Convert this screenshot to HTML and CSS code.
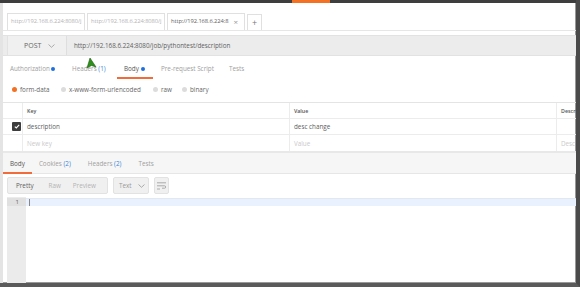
FILE: index.html
```html
<!DOCTYPE html>
<html lang="en">
<head>
    <meta charset="UTF-8">
    <title>Postman</title>
    <link rel="stylesheet" href="styles.css">
</head>
<body>
    <div class="screen">
        <div class="topbar"><span class="topbar-mark"></span></div>
        <div class="app">
            <div class="tabs">
                <div class="tab">http://192.168.6.224:8080/j</div>
                <div class="tab">http://192.168.6.224:8080/j</div>
                <div class="tab active"><span class="tab-text">http://192.168.6.224:8</span><span class="tab-close">&times;</span></div>
                <div class="tab-add">+</div>
            </div>
            <div class="request">
                <div class="method">POST
                    <svg class="chev" width="7" height="4" viewBox="0 0 7 4"><path d="M0.5 0.5 L3.5 3.3 L6.5 0.5" fill="none" stroke="#999" stroke-width="0.8"/></svg>
                </div>
                <div class="url">http://192.168.6.224:8080/job/pythontest/description</div>
            </div>
            <div class="subtabs">
                <span class="subtab">Authorization <i class="dot"></i></span>
                <span class="subtab">Headers <b class="count">(1)</b></span>
                <span class="subtab current">Body <i class="dot"></i></span>
                <span class="subtab">Pre-request Script</span>
                <span class="subtab">Tests</span>
            </div>
            <div class="radios">
                <span class="radio r1"><i class="circle on"></i>form-data</span>
                <span class="radio r2"><i class="circle"></i>x-www-form-urlencoded</span>
                <span class="radio r3"><i class="circle"></i>raw</span>
                <span class="radio"><i class="circle"></i>binary</span>
            </div>
            <div class="table">
                <div class="row head">
                    <div class="cell check"></div>
                    <div class="cell key">Key</div>
                    <div class="cell">Value</div>
                    <div class="cell desc">Descri</div>
                </div>
                <div class="row">
                    <div class="cell check"><span class="box">
                        <svg width="6" height="5" viewBox="0 0 6 5"><path d="M0.8 2.6 L2.3 3.9 L5.2 0.8" fill="none" stroke="#fff" stroke-width="1.1"/></svg>
                    </span></div>
                    <div class="cell key text">description</div>
                    <div class="cell text">desc change</div>
                    <div class="cell desc"></div>
                </div>
                <div class="row">
                    <div class="cell check"></div>
                    <div class="cell key hint">New key</div>
                    <div class="cell hint">Value</div>
                    <div class="cell desc hint">Desc</div>
                </div>
            </div>
            <div class="response">
                <div class="restabs">
                    <span class="restab current">Body</span>
                    <span class="restab">Cookies <b class="count">(2)</b></span>
                    <span class="restab">Headers <b class="count">(2)</b></span>
                    <span class="restab">Tests</span>
                </div>
            </div>
            <div class="toolbar">
                <div class="segment">
                    <span class="seg active">Pretty</span>
                    <span class="seg">Raw</span>
                    <span class="seg">Preview</span>
                </div>
                <div class="select">Text
                    <svg class="chev" width="7" height="4" viewBox="0 0 7 4"><path d="M0.5 0.5 L3.5 3.3 L6.5 0.5" fill="none" stroke="#999" stroke-width="0.8"/></svg>
                </div>
                <div class="wrap">
                    <svg width="9" height="8" viewBox="0 0 9 8"><path d="M0 0.8 H9 M0 3.8 H7.5 a1.2 1.2 0 0 1 0 2.4 H5 M0 7 H3" fill="none" stroke="#999" stroke-width="0.8"/></svg>
                </div>
            </div>
            <div class="editor">
                <div class="gutter"><div class="lineno">1</div></div>
                <div class="code"><div class="line"><span class="caret"></span></div></div>
            </div>
        </div>
        <svg class="cursor" width="12" height="12" viewBox="0 0 12 12"><path d="M2 11 L5 1 L11 10 L6.5 8.5 Z" fill="#2f8f1c" stroke="#1c5e10" stroke-width="0.6"/></svg>
    </div>
</body>
</html>
```

FILE: styles.css
```css
* {
    margin: 0;
    padding: 0;
    box-sizing: border-box;
}
body {
    width: 580px;
    height: 287px;
    overflow: hidden;
    background: #ffffff;
    font-family: "Open Sans", "DejaVu Sans", sans-serif;
    font-size: 6.3px;
    color: #606060;
}
.screen {
    position: relative;
    width: 580px;
    height: 287px;
    display: flex;
    flex-direction: column;
    border-right: 4px solid #4a4a4a;
    border-bottom: 4px solid #5a5a5a;
    box-shadow: inset -1px -1px 0 #999;
}
.topbar {
    height: 3px;
    background: #3e3e3e;
    display: flex;
}
.topbar-mark {
    margin-left: 292px;
    width: 38px;
    height: 3px;
    background: #f47023;
}
.app {
    flex: 1;
    display: flex;
    flex-direction: column;
    border-left: 3px solid #e4e4e4;
    overflow: hidden;
}
.tabs {
    display: flex;
    align-items: flex-end;
    gap: 2px;
    padding: 10px 0 0 4px;
    height: 28px;
    border-bottom: 1px solid #e6e6e6;
}
.tab {
    width: 78px;
    height: 17px;
    border: 1px solid #e0e0e0;
    border-bottom: none;
    padding: 0 3px;
    line-height: 15px;
    color: #b4b4b4;
    font-size: 5.8px;
    letter-spacing: -0.1px;
    white-space: nowrap;
}
.tab.active {
    color: #606060;
    display: flex;
    justify-content: space-between;
}
.tab-close {
    color: #999;
    font-size: 8px;
    margin-right: 3px;
}
.tab-add {
    width: 15px;
    height: 16px;
    border: 1px solid #e0e0e0;
    border-bottom: none;
    text-align: center;
    color: #777;
    font-size: 9px;
    line-height: 15px;
}
.request {
    margin-top: 4px;
    height: 21px;
    display: flex;
    background: #ececec;
    border-top: 1px solid #e2e2e2;
    border-bottom: 1px solid #e2e2e2;
    padding-left: 4px;
}
.method {
    width: 60px;
    background: #f0f0f0;
    border-right: 1px solid #dedede;
    border-left: 1px solid #e2e2e2;
    display: flex;
    align-items: center;
    gap: 7px;
    padding-left: 16px;
    color: #666;
    font-size: 7px;
}
.url {
    padding-left: 7px;
    display: flex;
    align-items: center;
    color: #606060;
}
.subtabs {
    display: flex;
    height: 22px;
    align-items: center;
    padding-left: 7px;
    margin-top: 1px;
}
.subtab {
    color: #a0a0a0;
    position: relative;
    height: 22px;
    line-height: 24px;
    white-space: nowrap;
}
.subtab:nth-child(1) { width: 62px; }
.subtab:nth-child(2) { width: 45px; }
.subtab:nth-child(3) { width: 36px; padding-left: 7px; margin-right: 8px; }
.subtab:nth-child(4) { width: 68px; }
.subtab.current {
    color: #555;
}
.subtab.current::after {
    content: "";
    position: absolute;
    left: 0;
    right: 0;
    bottom: 0;
    height: 2px;
    background: #f26b3a;
}
.dot {
    display: inline-block;
    width: 4px;
    height: 4px;
    border-radius: 50%;
    background: #1f6ee0;
    vertical-align: 0;
}
.count {
    font-weight: normal;
    color: #3b84d8;
}
.radios {
    display: flex;
    height: 21px;
    align-items: center;
    padding-left: 9px;
}
.radio {
    display: flex;
    align-items: center;
    gap: 3px;
    color: #666;
}
.radio.r1 { width: 49px; }
.radio.r2 { width: 92px; }
.radio.r3 { width: 29px; }
.circle {
    width: 5px;
    height: 5px;
    border-radius: 50%;
    background: #dcdcdc;
}
.circle.on {
    background: #f47023;
}
.table {
    margin-top: 2px;
    border-top: 1px solid #e4e4e4;
    border-bottom: 2px solid #e8e8e8;
}
.row {
    display: grid;
    grid-template-columns: 19px 267px 267px 1fr;
    height: 16px;
    border-bottom: 1px solid #ececec;
}
.row:last-child {
    border-bottom: none;
}
.cell {
    border-left: 1px solid #ececec;
    padding-left: 4px;
    display: flex;
    align-items: center;
    white-space: nowrap;
    overflow: hidden;
}
.cell.check {
    border-left: none;
    justify-content: flex-end;
    padding-left: 0;
    padding-right: 1px;
}
.head .cell {
    font-size: 5.3px;
    font-weight: 600;
    color: #555;
}
.text {
    color: #606060;
}
.hint {
    color: #cacaca;
}
.box {
    width: 9px;
    height: 9px;
    background: #3d3d3d;
    border-radius: 1px;
    display: flex;
    align-items: center;
    justify-content: center;
}
.response {
    height: 21px;
    background: #f6f6f6;
    border-bottom: 1px solid #e6e6e6;
}
.restabs {
    display: flex;
    height: 20px;
    align-items: center;
}
.restab {
    color: #a0a0a0;
    position: relative;
    height: 20px;
    line-height: 22px;
    margin-right: 17px;
}
.restab:first-child {
    padding: 0 7px 0 7px;
    margin-right: 7px;
}
.restab.current {
    color: #555;
}
.restab.current::after {
    content: "";
    position: absolute;
    left: 0;
    right: 0;
    bottom: -1px;
    height: 2px;
    background: #f26b3a;
}
.toolbar {
    display: flex;
    align-items: center;
    gap: 5px;
    height: 22px;
    padding-left: 4px;
    padding-top: 1px;
}
.segment {
    display: flex;
    height: 17px;
    background: #f0f0f0;
    border: 1px solid #e2e2e2;
    border-radius: 2px;
    width: 101px;
    align-items: center;
}
.seg {
    color: #b4b4b4;
    padding: 0 6px;
}
.seg.active {
    color: #606060;
    padding-left: 8px;
    padding-right: 9px;
}
.select {
    height: 17px;
    width: 36px;
    background: #f0f0f0;
    border: 1px solid #e2e2e2;
    border-radius: 2px;
    display: flex;
    align-items: center;
    gap: 6px;
    padding-left: 5px;
    color: #999;
}
.wrap {
    width: 15px;
    height: 17px;
    background: #f0f0f0;
    border: 1px solid #e2e2e2;
    border-radius: 2px;
    display: flex;
    align-items: center;
    justify-content: center;
}
.editor {
    flex: 1;
    display: flex;
    padding-left: 4px;
    margin-top: 1px;
}
.gutter {
    width: 19px;
    background: #ebebeb;
    padding-top: 1px;
}
.lineno {
    height: 8px;
    line-height: 8px;
    text-align: right;
    padding-right: 7px;
    font-size: 6px;
    color: #666;
    background: #e0e0e0;
}
.code {
    flex: 1;
    padding-top: 1px;
}
.line {
    height: 8px;
    background: #e8f1fd;
    border-top: 1px solid #e2e8f0;
    padding-left: 3px;
}
.caret {
    display: inline-block;
    width: 1px;
    height: 7px;
    background: #888;
}
.cursor {
    position: absolute;
    left: 85px;
    top: 57px;
}
```
